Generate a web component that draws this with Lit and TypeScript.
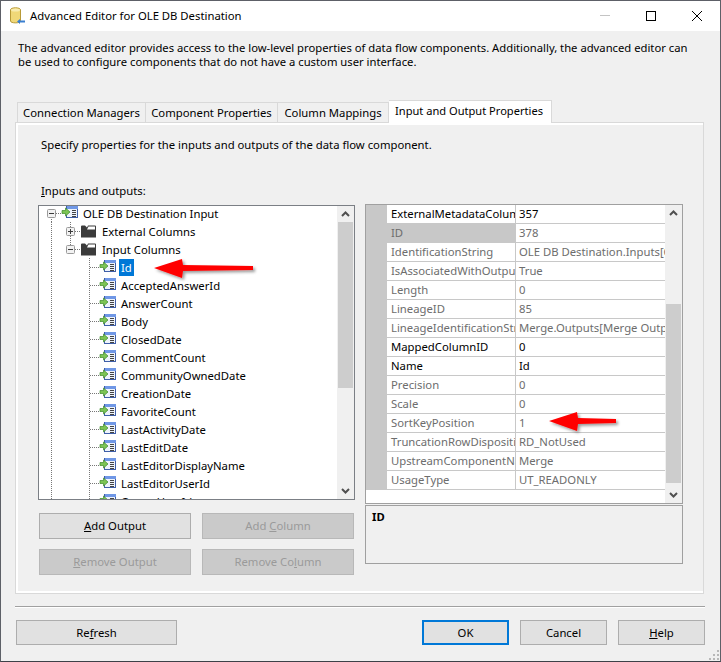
import { LitElement, html, css, svg } from "lit";
import { customElement } from "lit/decorators.js";

const leafIcon = html`<svg class="ico" width="18" height="16" viewBox="0 0 18 16"><rect x="5.500" y="1.500" width="11" height="11" fill="#eef3fb" stroke="#3f5fa8"/><rect x="6" y="1" width="11" height="3" fill="#6f97e6"/><path d="M11 5.500h4M11 7.500h4M11 9.500h4M11 11.500h4" stroke="#444" fill="none"/><path d="M1 5.500h3.500V3L9 7l-4.500 4V8.500H1z" fill="#7cc454" stroke="#3d8a2a" stroke-width=".7"/></svg>`;
const folderIcon = html`<svg class="ico" width="17" height="16" viewBox="0 0 17 16"><path d="M1 6.500V3.500q0-1 1-1h3l2 2h0l1-2h7q1 0 1 1v11H1z" fill="#3b3b3b"/><path d="M8.500 3.500h6.500v3H7z" fill="#fff"/></svg>`;
const exp = (minus: boolean) => html`<svg class="exp" width="9" height="9" viewBox="0 0 9 9"><rect x=".5" y=".5" width="8" height="8" rx="1" fill="#f2f2f2" stroke="#9a9a9a"/><path d="M2 4.500h5${minus ? "" : "M4.500 2v5"}" stroke="#3a3a3a" fill="none"/></svg>`;
const arrow = (w: number) => svg`<svg class="arrow-svg" width="${w + 8}" height="30" viewBox="0 0 ${w + 8} 30">
  <defs><filter id="s" x="-10%" y="-30%" width="130%" height="170%"><feDropShadow dx="2" dy="2" stdDeviation="1.500" flood-color="#000" flood-opacity=".4"/></filter></defs>
  <path d="M1 14 L29 5 L30 11 L${w} 12 L${w} 16 L30 17 L29 24 Z" fill="#f00" filter="url(#s)"/></svg>`;

const leaves = ["Id","AcceptedAnswerId","AnswerCount","Body","ClosedDate","CommentCount","CommunityOwnedDate","CreationDate","FavoriteCount","LastActivityDate","LastEditDate","LastEditorDisplayName","LastEditorUserId","OwnerUserId"];
const props: [string, string, boolean?][] = [
  ["ExternalMetadataColumnID","357",true],["ID","378"],["IdentificationString","OLE DB Destination.Inputs[OLE DB Destination Input]"],
  ["IsAssociatedWithOutputColumn","True"],["Length","0"],["LineageID","85"],["LineageIdentificationString","Merge.Outputs[Merge Output]"],
  ["MappedColumnID","0",true],["Name","Id",true],["Precision","0"],["Scale","0"],["SortKeyPosition","1"],
  ["TruncationRowDisposition","RD_NotUsed"],["UpstreamComponentName","Merge"],["UsageType","UT_READONLY"]];

@customElement("app-root")
export class AppRoot extends LitElement {
  static styles = css`
    :host{display:block;width:721px;height:662px;font-family:"Noto Sans",sans-serif;font-size:11.3px;color:#000;overflow:hidden}
    .win{position:relative;box-sizing:border-box;width:721px;height:662px;border:1px solid #5d6067;border-bottom-color:#3d4148;background:#f0f0f0;display:flex;flex-direction:column}
    .title{height:30px;background:#fff;display:flex;align-items:center;flex:none}
    .title .logo{margin-left:9px;margin-right:4px}
    .title .t{flex:1;font-size:11.3px;padding-bottom:2px}
    .wb{width:46px;height:30px;display:flex;align-items:center;justify-content:center}
    .desc{margin:10px 0 0 17px;line-height:14px;height:30px;width:680px;flex:none;font-size:11.26px}
    .tabs{display:flex;margin:29px 0 0 16px;height:22px;align-items:flex-end;flex:none;position:relative;z-index:1}
    .tab{height:20px;box-sizing:border-box;border:1px solid #d9d9d9;border-bottom:none;border-left:none;background:#f0f0f0;display:flex;align-items:center;justify-content:center;line-height:18px}
    .tab:first-child{border-left:1px solid #d9d9d9}
    .tab.on{height:23px;background:#fff;margin-bottom:-1px;padding:0 2px 3px 0;border-left:none;font-size:11.1px}
    .panel{box-sizing:border-box;margin-left:14px;width:689px;height:472px;border:1px solid #d9d9d9;box-shadow:inset 2px 2px 0 #fff,inset 0 -2px 0 #fff;flex:none;padding:0 0 0 22px;display:flex;flex-direction:column}
    .hint{margin:14px 0 0 3px;line-height:16px}
    .lab{margin:30px 0 0 3px;line-height:16px}
    u{text-underline-offset:1px}
    .cols{display:flex;gap:10px;margin-top:6px}
    .left{width:317px}.right{width:318px;display:flex;flex-direction:column;margin-top:-1px}
    .tree{box-sizing:border-box;height:295px;border:1px solid #7b7f85;background:#fff;display:flex;overflow:hidden}
    .tree-in{flex:1;padding:0 0 0 3px;margin-top:-2px;overflow:hidden}
    .tr{height:18px;display:flex;align-items:center;white-space:nowrap}
    .cell{width:19px;height:18px;flex:none;display:flex;align-items:center;justify-content:center;background-repeat:no-repeat;
      --dv:repeating-linear-gradient(to bottom,#777 0 1px,transparent 1px 2px);--dh:repeating-linear-gradient(to right,#777 0 1px,transparent 1px 2px)}
    .v{background-image:var(--dv);background-size:1px 100%;background-position:9px 0}
    .vh{background-image:var(--dv),var(--dh);background-size:1px 100%,10px 1px;background-position:9px 0,10px 9px}
    .dn{background-image:var(--dv),var(--dh);background-size:1px 9px,6px 1px;background-position:9px 9px,14px 9px}
    .up{background-image:var(--dv),var(--dh);background-size:1px 9px,6px 1px;background-position:9px 0,14px 9px}
    .fl{background-image:var(--dv),var(--dh);background-size:1px 100%,6px 1px;background-position:9px 0,14px 9px}
    .ico{flex:none}
    .tr .lbl{margin-left:2px;padding:0 2px;line-height:17px}
    .tr.root .lbl{margin-left:2px}
    .tr.fold .lbl{margin-left:3px}
    .lbl.sel{background:#0078d7;color:#fff}
    .sb{width:17px;flex:none;background:#f0f0f0;display:flex;flex-direction:column;align-items:center;overflow:hidden}
    .sb .ab{height:16px;flex:none;display:flex;align-items:center;justify-content:center}
    .sb .th{width:15px;background:#cdcdcd;flex:none}
    .sb .fill{flex:1}
    .tree-th{height:166px}
    .btns{display:grid;grid-template-columns:152px 152px;column-gap:11px;row-gap:10px;margin:13px 0 0 1px}
    .btn{box-sizing:border-box;height:26px;border:1px solid #adadad;background:#e1e1e1;display:flex;align-items:center;justify-content:center;padding-bottom:1px;white-space:pre}
    .btn.dis{background:#cacaca;border-color:#b8b8b8;color:#9a9a9a}
    .grid{box-sizing:border-box;height:300px;border:1px solid #a0a0a0;background:#fff;display:flex;flex:none}
    .grid-in{flex:1;overflow:hidden}
    .pr{display:flex;height:19px;box-sizing:border-box;border-bottom:1px solid #c8c8c8}
    .gut{width:21px;background:#c8c8c8;flex:none;margin-bottom:-1px}
    .pn,.pv{white-space:nowrap;overflow:hidden;padding-left:4px;line-height:18px;box-sizing:border-box;color:#6d6d6d}
    .pn{width:129px;flex:none;border-right:1px solid #c8c8c8}
    .pv{flex:1;padding-left:3px}
    .pr.b .pn,.pr.b .pv{color:#000}
    .pr.sel .pn{background:#c8c8c8}
    .pthumb{height:179px;margin-top:83px}
    .dbox{box-sizing:border-box;height:59px;margin-top:1px;border:1px solid #a0a0a0;padding:3px 6px;font-weight:700;line-height:15px;background:#f0f0f0}
    .sep{flex:none;margin:12px 0 0 14px;width:690px;height:1px;background:#a0a0a0;box-shadow:0 1px 0 #fff}
    .foot{display:flex;margin:13px 0 0 15px;width:689px;flex:none}
    .foot .btn{height:25px;width:87px;margin-left:11px}
    .foot .btn.r{width:161px;margin:0 245px 0 0}
    .foot .btn.ok{border:2px solid #0078d7;margin-left:0}
    .arrow{position:absolute;pointer-events:none}
    .arrow svg{display:block}
    .a1{left:152px;top:253px}
    .a2{left:547px;top:406px}
    .grip{position:absolute;right:1px;bottom:1px}
  `;
  render() {
    return html`<div class="win">
      <div class="title">
        <svg class="logo" width="16" height="18" viewBox="0 0 16 18"><path d="M0.500 3c0-3 10-3 10 0v11c0 2.500-10 2.500-10 0z" fill="#f0d878" stroke="#b89a38"/><ellipse cx="5.500" cy="3" rx="4.500" ry="1.500" fill="#f8ecb0"/><path d="M7 14.500l3-2.500v1.500h5v2h-5V17z" fill="#3a7fd0"/></svg>
        <span class="t">Advanced Editor for OLE DB Destination</span>
        <div class="wb"><svg width="10" height="10"><path d="M0 4.500h10" stroke="#c4c4c4"/></svg></div>
        <div class="wb"><svg width="10" height="10"><rect x=".5" y=".5" width="9" height="9" fill="none" stroke="#000"/></svg></div>
        <div class="wb"><svg width="10" height="10"><path d="M0 0l10 10M10 0L0 10" stroke="#000"/></svg></div>
      </div>
      <div class="desc">The advanced editor provides access to the low-level properties of data flow components. Additionally, the advanced editor can be used to configure components that do not have a custom user interface.</div>
      <div class="tabs">
        <div class="tab" style="width:129px">Connection Managers</div>
        <div class="tab" style="width:132px">Component Properties</div>
        <div class="tab" style="width:111px">Column Mappings</div>
        <div class="tab on" style="width:163px">Input and Output Properties</div>
      </div>
      <div class="panel">
        <div class="hint">Specify properties for the inputs and outputs of the data flow component.</div>
        <div class="lab"><u>I</u>nputs and outputs:</div>
        <div class="cols">
          <div class="left">
            <div class="tree">
              <div class="tree-in">
                <div class="tr root"><span class="cell dn">${exp(true)}</span>${leafIcon}<span class="lbl">OLE DB Destination Input</span></div>
                <div class="tr fold"><span class="cell v"></span><span class="cell fl">${exp(false)}</span>${folderIcon}<span class="lbl">External Columns</span></div>
                <div class="tr fold"><span class="cell v"></span><span class="cell up">${exp(true)}</span>${folderIcon}<span class="lbl">Input Columns</span></div>
                ${leaves.map((l, i) => html`<div class="tr"><span class="cell v"></span><span class="cell"></span><span class="cell vh"></span>${leafIcon}<span class="lbl ${i === 0 ? "sel" : ""}">${l}</span></div>`)}
              </div>
              <div class="sb"><div class="ab"><svg width="9" height="6"><path d="M1 5l3.500-3.500L8 5" stroke="#505050" stroke-width="2" fill="none"/></svg></div><div class="th tree-th"></div><div class="fill"></div><div class="ab"><svg width="9" height="6"><path d="M1 1l3.500 3.500L8 1" stroke="#505050" stroke-width="2" fill="none"/></svg></div></div>
            </div>
            <div class="btns">
              <div class="btn"><span><u>A</u>dd Output</span></div>
              <div class="btn dis"><span>Add <u>C</u>olumn</span></div>
              <div class="btn dis"><span><u>R</u>emove Output</span></div>
              <div class="btn dis"><span>Remove Co<u>l</u>umn</span></div>
            </div>
          </div>
          <div class="right">
            <div class="grid">
              <div class="grid-in">
                ${props.map((p, i) => html`<div class="pr ${p[2] ? "b" : ""} ${i === 1 ? "sel" : ""}"><div class="gut"></div><div class="pn">${p[0]}</div><div class="pv">${p[1]}</div></div>`)}
              </div>
              <div class="sb"><div class="ab"><svg width="9" height="6"><path d="M1 5l3.500-3.500L8 5" stroke="#505050" stroke-width="2" fill="none"/></svg></div><div class="th pthumb"></div><div class="fill"></div><div class="ab"><svg width="9" height="6"><path d="M1 1l3.500 3.500L8 1" stroke="#505050" stroke-width="2" fill="none"/></svg></div></div>
            </div>
            <div class="dbox">ID</div>
          </div>
        </div>
      </div>
      <div class="sep"></div>
      <div class="foot">
        <div class="btn r"><span>Re<u>f</u>resh</span></div>
        <div class="btn ok">OK</div>
        <div class="btn">Cancel</div>
        <div class="btn"><span><u>H</u>elp</span></div>
      </div>
      <div class="arrow a1">${arrow(100)}</div>
      <div class="arrow a2">${arrow(68)}</div>
      <svg class="grip" width="11" height="11" viewBox="0 0 11 11"><path d="M9 1h2v2H9zM5 5h2v2H5zM9 5h2v2H9zM1 9h2v2H1zM5 9h2v2H5zM9 9h2v2H9z" fill="#b8b8b8"/></svg>
    </div>`;
  }
}
